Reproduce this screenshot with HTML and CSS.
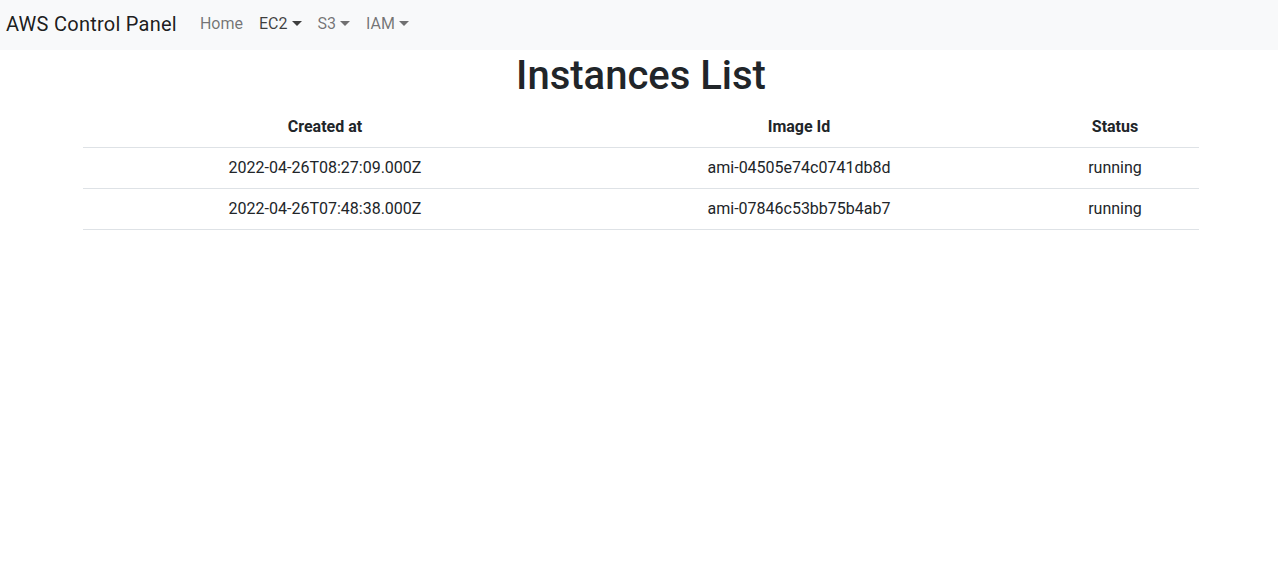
FILE: index.html
```html
<!DOCTYPE html>
<html lang="en">
<head>
<meta charset="utf-8">
<title>AWS Control Panel</title>
<link rel="stylesheet" href="styles.css">
</head>
<body>
<nav class="navbar">
  <a class="brand" href="#">AWS Control Panel</a>
  <ul class="nav">
    <li><a class="nav-link" href="#">Home</a></li>
    <li><a class="nav-link toggle active" href="#">EC2</a></li>
    <li><a class="nav-link toggle" href="#">S3</a></li>
    <li><a class="nav-link toggle" href="#">IAM</a></li>
  </ul>
</nav>
<main class="content">
  <h1 class="title">Instances List</h1>
  <table class="table">
    <colgroup>
      <col class="c1"><col class="c2"><col class="c3">
    </colgroup>
    <thead>
      <tr><th>Created at</th><th>Image Id</th><th>Status</th></tr>
    </thead>
    <tbody>
      <tr><td>2022-04-26T08:27:09.000Z</td><td>ami-04505e74c0741db8d</td><td>running</td></tr>
      <tr><td>2022-04-26T07:48:38.000Z</td><td>ami-07846c53bb75b4ab7</td><td>running</td></tr>
    </tbody>
  </table>
</main>
</body>
</html>
```
FILE: styles.css
```css
* { box-sizing: border-box; }
html, body { margin: 0; padding: 0; }
body {
  font-family: Roboto, "Liberation Sans", sans-serif;
  font-size: 16px;
  line-height: 1.5;
  color: #212529;
  background: #fff;
}
a { text-decoration: none; }
.navbar {
  display: flex;
  align-items: center;
  height: 50px;
  padding: 0 6px 3px;
  background: #f8f9fa;
}
.brand {
  font-size: 20px;
  line-height: 30px;
  letter-spacing: 0.25px;
  color: rgba(0,0,0,.9);
  margin-right: 15px;
}
.nav {
  display: flex;
  list-style: none;
  margin: 0;
  padding: 0;
}
.nav-link {
  display: block;
  padding: 0 8px;
  line-height: 24px;
  color: rgba(0,0,0,.55);
}
.nav-link.active { color: rgba(0,0,0,.75); }
.toggle::after {
  content: "";
  display: inline-block;
  margin-left: 4px;
  vertical-align: 3px;
  border-top: 5px solid;
  border-right: 5px solid transparent;
  border-left: 5px solid transparent;
}
.content { padding: 0 0 0 4px; }
.title {
  margin: 0 0 7px;
  padding-top: 2px;
  font-size: 40px;
  font-weight: 500;
  line-height: 48px;
  text-align: center;
}
.table {
  width: 1116px;
  margin: 0 auto;
  border-collapse: collapse;
  table-layout: fixed;
}
.c1 { width: 484px; }
.c2 { width: 464px; }
.c3 { width: 168px; }
.table th, .table td {
  padding: 8px;
  text-align: center;
  border-bottom: 1px solid #dee2e6;
}
.table th { font-weight: 700; }
```
